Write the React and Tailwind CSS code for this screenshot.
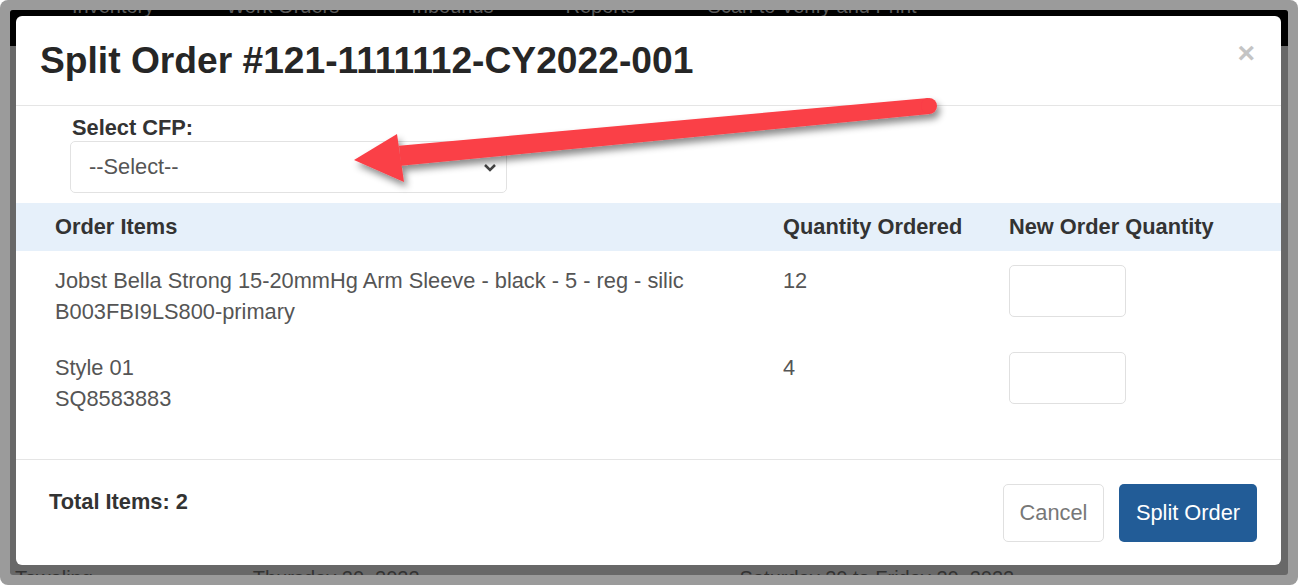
import React from "react";

const items = [
  { name: "Jobst Bella Strong 15-20mmHg Arm Sleeve - black - 5 - reg - silic", sku: "B003FBI9LS800-primary", qty: 12 },
  { name: "Style 01", sku: "SQ8583883", qty: 4 },
];

const navLinks = ["Inventory", "Work Orders", "Inbounds", "Reports", "Scan to Verify and Print"];

const Arrow = () => (
  <svg className="absolute inset-0 pointer-events-none" width="1298" height="585" viewBox="0 0 1298 585">
    <defs>
      <filter id="arrowShadow" x="-10%" y="-50%" width="120%" height="200%">
        <feDropShadow dx="3" dy="5" stdDeviation="3.5" floodColor="#000" floodOpacity="0.45" />
      </filter>
    </defs>
    <g filter="url(#arrowShadow)" fill="#fa3f47">
      <polygon points="928.3,98 929.7,114 401,165.7 399,145.7" />
      <circle cx="929" cy="106" r="8" />
      <polygon points="354,160 397,134 404,182" />
    </g>
  </svg>
);

export default function App() {
  return (
    <div className="w-[1298px] h-[585px] bg-white font-['Liberation_Sans',Arial,Helvetica,sans-serif]">
      <div className="relative w-full h-full bg-[#9b9b9b] rounded-[8px] p-[10px]">
        {/* dimmed page behind the modal */}
        <div className="relative w-full h-full bg-[#686868] rounded-[3px] overflow-hidden flex flex-col">
          <div className="h-[36px] bg-black flex items-start gap-[72px] pl-[62px] overflow-hidden">
            {navLinks.map((l) => (
              <span key={l} className="-mt-[14px] text-[20px] leading-[20px] text-[#5a5a5a] whitespace-nowrap">{l}</span>
            ))}
          </div>
          <div className="flex-1" />
          <div className="h-[10px] overflow-hidden flex items-start text-[20px] leading-[20px] text-[#333] whitespace-nowrap">
            <span className="ml-[5px] mt-[3px]">Toweling</span>
            <span className="ml-[160px] mt-[3px]">Thursday 20, 2022</span>
            <span className="ml-[320px] mt-[3px]">Saturday 20 to Friday 20, 2022</span>
          </div>

          {/* modal */}
          <div className="absolute left-[6px] top-[6px] right-[7px] bottom-[10px] bg-white rounded-[6px] flex flex-col">
            <div className="h-[90px] shrink-0 flex items-center justify-between pl-[24px] pr-[26px] border-b border-[#e5e5e5]">
              <h4 className="text-[37.2px] font-bold text-[#262626] leading-none">Split Order #121-1111112-CY2022-001</h4>
              <span className="text-[30px] font-bold text-[#c4c4c4] leading-none mb-[16px]">×</span>
            </div>

            <div className="flex-1 text-[21.8px]">
              <div className="px-[54px] pt-[10px] pb-[10px]">
                <label className="block pl-[2px] font-bold leading-[24px] text-[#333]">Select CFP:</label>
                <div className="mt-[1px] w-[437px] h-[52px] border border-[#e2e2e2] rounded-[5px] flex items-center justify-between pl-[18px] pr-[9px] text-[#555]">
                  <span>--Select--</span>
                  <svg width="14" height="9" viewBox="0 0 14 9">
                    <path d="M2 2 L7 7 L12 2" fill="none" stroke="#444" strokeWidth="2.5" />
                  </svg>
                </div>
              </div>

              <div className="grid grid-cols-[728px_226px_1fr] h-[48px] items-center bg-[#e6f0fa] pl-[39px] font-bold text-[#333]">
                <span>Order Items</span>
                <span>Quantity Ordered</span>
                <span>New Order Quantity</span>
              </div>
              {items.map((item) => (
                <div key={item.sku} className="grid grid-cols-[728px_226px_1fr] items-start pl-[39px] pt-[14px] pb-[11px] text-[#555] leading-[31px]">
                  <div>
                    <div>{item.name}</div>
                    <div>{item.sku}</div>
                  </div>
                  <div>{item.qty}</div>
                  <div className="w-[117px] h-[52px] border border-[#e0e0e0] rounded-[5px]" />
                </div>
              ))}
            </div>

            <div className="h-[106px] shrink-0 border-t border-[#e5e5e5] flex justify-between items-start pt-[24px] pl-[33px] pr-[24px] text-[21.8px]">
              <span className="mt-[2px] leading-[31px] font-bold text-[#333]">Total Items: 2</span>
              <div className="flex gap-[15px]">
                <button className="w-[101px] h-[58px] border border-[#e0e0e0] rounded-[5px] bg-white text-[#777]">Cancel</button>
                <button className="w-[138px] h-[58px] rounded-[5px] bg-[#225c97] text-white">Split Order</button>
              </div>
            </div>
          </div>
        </div>
        <Arrow />
      </div>
    </div>
  );
}
